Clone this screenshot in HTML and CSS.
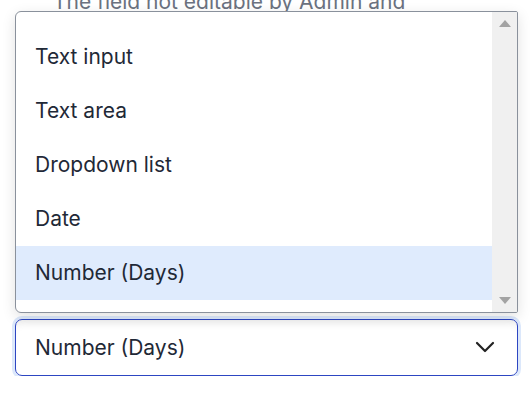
FILE: index.html
```html
<!DOCTYPE html>
<html lang="en">
<head>
    <meta charset="UTF-8">
    <meta name="viewport" content="width=device-width, initial-scale=1.0">
    <title>Field type</title>
    <link rel="stylesheet" href="styles.css">
</head>
<body>

    <div class="field">
        <p class="hint">The field not editable by Admin and</p>

        <div class="select" id="type-select">
            <span class="select-value">Number (Days)</span>
            <svg class="chevron" width="20" height="12" viewBox="0 0 20 12">
                <path d="M2 2 L10 10 L18 2" fill="none" stroke="#222" stroke-width="2.2" stroke-linecap="round" stroke-linejoin="round"/>
            </svg>
        </div>

        <div class="listbox">
            <ul class="options">
                <li>Text input</li>
                <li>Text area</li>
                <li>Dropdown list</li>
                <li>Date</li>
                <li class="selected">Number (Days)</li>
            </ul>
            <div class="scrollbar">
                <span class="arrow up"></span>
                <span class="arrow down"></span>
            </div>
        </div>
    </div>

</body>
</html>
```

FILE: styles.css
```css
body {
    font-family: Inter, "Noto Sans", sans-serif;
    background-color: #fff;
    margin: 0;
    padding: 0;
    color: #1f2937;
    overflow: hidden;
}

.field {
    position: relative;
    display: flow-root;
    padding: 0 14px 0 15px;
}

.hint {
    margin: -12px 0 0 38px;
    font-size: 21px;
    line-height: 28px;
    color: #6b7280;
    height: 25px;
    white-space: nowrap;
    overflow: hidden;
}

.select {
    margin-top: 306px;
    height: 55px;
    border: 1px solid #2d46c2;
    border-radius: 7px;
    box-shadow: 0 0 0 3px #dce8fb, inset 0 8px 10px -6px rgba(0, 0, 0, 0.08);
    display: flex;
    align-items: center;
    justify-content: space-between;
    padding: 0 22px 0 19px;
    font-size: 21px;
    color: #1f2937;
}

.chevron {
    margin-top: -2px;
}

/* open popup, drawn over the field */
.listbox {
    position: absolute;
    top: 11px;
    left: 15px;
    width: 501px;
    height: 300px;
    border: 1px solid #8a919c;
    border-radius: 6px 2px 2px 6px;
    background-color: #fff;
    box-shadow: 0 4px 14px rgba(0, 0, 0, 0.12);
    display: flex;
    overflow: hidden;
}

.options {
    list-style: none;
    margin: 0;
    padding: 18px 0 0 0;
    flex: 1;
}

.options li {
    height: 54px;
    line-height: 54px;
    padding-left: 19px;
    font-size: 21px;
}

.options li.selected {
    background-color: #dfebfd;
}

.scrollbar {
    width: 25px;
    background-color: #f0f0f0;
    position: relative;
}

.arrow {
    position: absolute;
    left: 7px;
    width: 0;
    height: 0;
    border-left: 6px solid transparent;
    border-right: 6px solid transparent;
}

.arrow.up {
    top: 8px;
    border-bottom: 7px solid #a3a3a3;
}

.arrow.down {
    bottom: 8px;
    border-top: 7px solid #a3a3a3;
}
```
